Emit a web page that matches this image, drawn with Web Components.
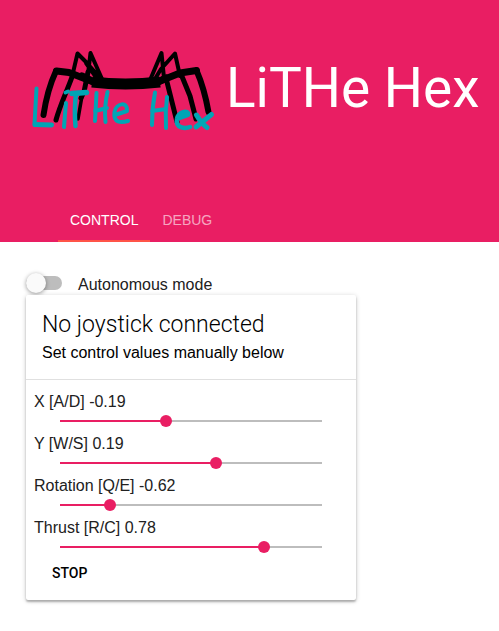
<!DOCTYPE html>
<html lang="en">
<head>
<meta charset="utf-8">
<meta name="viewport" content="width=device-width, initial-scale=1">
<title>LiTHe Hex</title>
<style>
  body { margin: 0; background: #fff; color: #212121; font: 16px/20px "Liberation Sans", Arial, sans-serif; }
</style>
</head>
<body>
<hex-app></hex-app>
<script>
class Base extends HTMLElement {
  constructor() {
    super();
    this.attachShadow({ mode: "open" });
  }
  connectedCallback() {
    this.shadowRoot.innerHTML = this.render();
    this.ready();
  }
  ready() {}
}

customElements.define("hex-logo", class extends Base {
  render() {
    return `<style>
      :host { display: block; flex: none; width: 190px; }
      svg { display: block; width: 100%; }
    </style>
    <svg viewBox="30 45 190 90" role="img" aria-label="LiTHe Hex logo" fill="none" stroke-linecap="round" stroke-linejoin="round">
      <g stroke="#000">
        <path stroke-width="6" d="M43.5 115C46 98 50 84 56 71"/>
        <path stroke-width="7" d="M56.500 71L69 72.500L96 83"/>
        <path stroke-width="5" d="M56 120C60 105 67 91 72 77"/>
        <path stroke-width="4" d="M72 77L77.500 53.500L86 62L102 80M88 74L90.500 53L102 79M86 63L98 80"/>
        <path stroke-width="5" d="M81 98L84 92L88 72"/>
        <path stroke-width="3.500" d="M78 119L82 96"/>
        <path stroke-width="11" stroke-linecap="butt" d="M92 82Q125 86 160 82"/>
        <path stroke-width="7" d="M82 76L96 83M156 83L166 78"/>
        <path stroke-width="4" d="M150.500 79L161.500 53L164 78M155 79L161 69L175 53.500L180 76"/>
        <path stroke-width="5" d="M166 78L171 98L177 122M181 74L190 96L196 119"/>
        <path stroke-width="7" d="M160 81L180 73L196.500 70.500"/>
        <path stroke-width="6" d="M196.500 70.500C202 83 206 98 208.500 112"/>
      </g>
      <g stroke="#00a5b5" stroke-width="4">
        <path d="M36.500 88.500L34.500 124"/>
        <path stroke-width="5" d="M35 124.500L51.500 125"/>
        <path d="M66 103Q65 114 64 127M65.500 92.500L68 91.500"/>
        <path stroke-width="4.500" d="M76 94Q74 109 75.500 126"/>
        <path stroke-width="5.500" d="M72 93.500L86.500 92.500"/>
        <path d="M96.500 93L95 121M107.500 92Q104 107 105.500 122M95 111L107 108"/>
        <path d="M115 115L127 111C128 101 116 103 114.500 112C113 123 121 123 128 121"/>
        <path d="M155 92.500Q152 108 152 125M167 97Q165 112 166 128M152 111L166 109"/>
        <path stroke-width="4.500" d="M177 119L188 115C189 109 178 112 177 119C175 128 185 129 190 127"/>
        <path stroke-width="5" d="M196.500 115Q201 123 207 127.500M211.500 114.500L196 127"/>
      </g>
    </svg>`;
  }
});

customElements.define("hex-tab", class extends Base {
  render() {
    return `<style>
      :host { display: block; }
      button { display: block; height: 44px; padding: 0 12px; border: 0; border-bottom: 2px solid transparent;
        background: none; color: #fff; font: 14px/44px "Liberation Sans", Arial, sans-serif; text-transform: uppercase; cursor: pointer; }
      button[aria-selected="false"] span { opacity: .6; }
      button[aria-selected="true"] { border-bottom-color: #ff5448; }
    </style>
    <button role="tab" aria-selected="${this.hasAttribute("selected")}"><span><slot></slot></span></button>`;
  }
});

customElements.define("hex-header", class extends Base {
  render() {
    return `<style>
      :host { display: block; background: #e91e63; color: #fff; }
      .brand { display: flex; align-items: center; gap: 6px; padding: 44px 20px 62px 30px; }
      h1 { margin: 0; padding-bottom: 4px; font: 400 55px/88px Roboto, sans-serif; white-space: nowrap; }
      nav { display: flex; padding-left: 58px; }
    </style>
    <div class="brand"><hex-logo></hex-logo><h1><slot></slot></h1></div>
    <nav role="tablist"><slot name="tabs"></slot></nav>`;
  }
});

customElements.define("hex-toggle", class extends Base {
  render() {
    return `<style>
      :host { display: block; }
      label { display: flex; align-items: center; gap: 16px; cursor: pointer; }
      input { appearance: none; flex: none; display: flex; align-items: center; width: 36px; height: 14px; margin: 0 0 2px;
        border-radius: 7px; background: #bdbdbd; cursor: pointer; }
      input::before { content: ""; width: 20px; height: 20px; border-radius: 50%; background: #fafafa;
        box-shadow: 0 1px 4px rgba(0,0,0,.4); }
      input:checked { justify-content: flex-end; background: #f48fb1; }
      input:checked::before { background: #e91e63; }
      span { padding-top: 3px; }
    </style>
    <label><input type="checkbox" role="switch"><span><slot></slot></span></label>`;
  }
});

customElements.define("hex-slider", class extends Base {
  render() {
    const min = this.getAttribute("min"), value = this.getAttribute("value");
    return `<style>
      :host { display: block; }
      label { display: block; line-height: 20px; }
      input { appearance: none; display: block; width: calc(100% - 40px); height: 18px; margin: 0 20px 4px; background: none; cursor: pointer; }
      input::-webkit-slider-runnable-track { height: 12px;
        background:
          linear-gradient(#e91e63, #e91e63) 6px 5px / calc((100% - 12px) * var(--fill)) 2px no-repeat,
          linear-gradient(#bdbdbd, #bdbdbd) 6px 5px / calc(100% - 12px) 2px no-repeat; }
      input::-webkit-slider-thumb { appearance: none; width: 12px; height: 12px; border-radius: 50%; background: #e91e63; }
    </style>
    <label for="range"><slot></slot> <output>${value}</output></label>
    <input id="range" type="range" min="${min}" max="1" step="0.01" value="${value}">`;
  }
  ready() {
    const input = this.shadowRoot.querySelector("input");
    const output = this.shadowRoot.querySelector("output");
    const update = () => {
      output.textContent = input.value;
      input.style.setProperty("--fill", (input.value - input.min) / (input.max - input.min));
    };
    input.addEventListener("input", update);
    update();
  }
});

customElements.define("hex-button", class extends Base {
  render() {
    return `<style>
      :host { display: block; }
      button { display: block; height: 26px; padding: 0 8px; border: 0; border-radius: 2px; background: none; color: #000;
        font: 500 14px/26px Roboto, sans-serif; text-transform: uppercase; cursor: pointer; }
    </style>
    <button type="button"><slot></slot></button>`;
  }
});

customElements.define("hex-card", class extends Base {
  render() {
    return `<style>
      :host { display: block; position: relative; max-width: 330px; border-radius: 2px; background: #fff;
        box-shadow: 0 2px 2px rgba(0,0,0,.24), 0 1px 5px rgba(0,0,0,.2); }
      header { padding: 13px 16px 15px; border-bottom: 1px solid #e0e0e0; color: #000; }
      h2 { margin: 0; font: 300 23px/34px Roboto, sans-serif; }
      p { margin: 0; line-height: 22px; }
      .body { padding: 12px 8px 14px; }
      .actions { padding: 0 10px; }
    </style>
    <header><h2><slot name="title"></slot></h2><p><slot name="subtitle"></slot></p></header>
    <div class="body"><slot></slot><div class="actions"><slot name="actions"></slot></div></div>`;
  }
});

customElements.define("hex-app", class extends Base {
  render() {
    return `<style>
      :host { display: block; }
      main { padding: 30px 26px; }
    </style>
    <hex-header>LiTHe Hex
      <hex-tab slot="tabs" selected>Control</hex-tab>
      <hex-tab slot="tabs">Debug</hex-tab>
    </hex-header>
    <main>
      <hex-toggle>Autonomous mode</hex-toggle>
      <hex-card>
        <span slot="title">No joystick connected</span>
        <span slot="subtitle">Set control values manually below</span>
        <hex-slider min="-1" value="-0.19">X [A/D]</hex-slider>
        <hex-slider min="-1" value="0.19">Y [W/S]</hex-slider>
        <hex-slider min="-1" value="-0.62">Rotation [Q/E]</hex-slider>
        <hex-slider min="0" value="0.78">Thrust [R/C]</hex-slider>
        <hex-button slot="actions">Stop</hex-button>
      </hex-card>
    </main>`;
  }
});
</script>
</body>
</html>
